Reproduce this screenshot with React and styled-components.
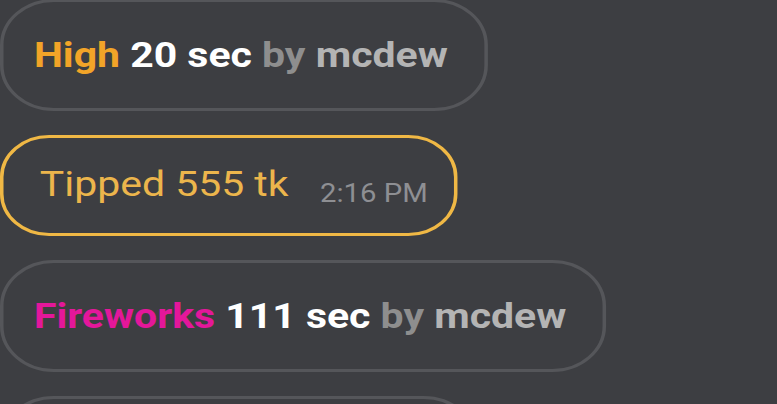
import styled, { createGlobalStyle } from "styled-components";

const GlobalStyle = createGlobalStyle`
  html, body {
    margin: 0;
    padding: 0;
    background: #3d3e42;
    overflow: hidden;
  }
  body {
    font-family: Roboto, "Liberation Sans", sans-serif;
  }
`;

const events = [
  { kind: "effect", name: "High", color: "#f2a428", amount: "20 sec", user: "mcdew" },
  { kind: "tip", text: "Tipped 555 tk", time: "2:16 PM" },
  { kind: "effect", name: "Fireworks", color: "#e4179a", amount: "111 sec", user: "mcdew" },
  { kind: "effect", name: "Low", color: "#5fb0f0", amount: "10 sec", user: "mcdew" },
];

function App() {
  return (
    <>
      <GlobalStyle />
      <Feed>
        {events.map((e, i) =>
          e.kind === "tip" ? (
            <TipBubble key={i}>
              <TipText>{e.text}</TipText>
              <Time>{e.time}</Time>
            </TipBubble>
          ) : (
            <Bubble key={i}>
              <Line>
                <Name $color={e.color}>{e.name}</Name> <Amount>{e.amount}</Amount>{" "}
                <By>by</By> <User>{e.user}</User>
              </Line>
            </Bubble>
          )
        )}
      </Feed>
    </>
  );
}
export default App;

// the capture is stretched sideways, so the whole feed is too
const Feed = styled.div`
  display: flex;
  flex-direction: column;
  align-items: flex-start;
  gap: 24px;
  width: fit-content;
  margin-top: -1px;
  transform: scaleX(1.17);
  transform-origin: 0 0;
`;

const Bubble = styled.div`
  display: flex;
  align-items: center;
  box-sizing: border-box;
  height: 112px;
  padding: 0 31px 0 26px;
  border: 3px solid #55565a;
  border-radius: 46px;
`;

const Line = styled.div`
  font-size: 35px;
  font-weight: 700;
  line-height: 35px;
  white-space: nowrap;
`;

const Name = styled.span`
  color: ${(p) => p.$color};
`;

const Amount = styled.span`
  color: #ffffff;
`;

const By = styled.span`
  color: #8e8e8e;
`;

const User = styled.span`
  color: #b4b4b4;
`;

const TipBubble = styled.div`
  display: flex;
  align-items: flex-start;
  gap: 27px;
  box-sizing: border-box;
  height: 101px;
  padding: 29px 22px 0 31px;
  border: 3px solid #f0b845;
  border-radius: 42px;
`;

const TipText = styled.span`
  font-size: 35px;
  line-height: 35px;
  font-weight: 400;
  color: #ecb54c;
  white-space: nowrap;
`;

const Time = styled.span`
  margin-top: 14px;
  font-size: 25px;
  line-height: 25px;
  color: #8e8f93;
  white-space: nowrap;
`;
